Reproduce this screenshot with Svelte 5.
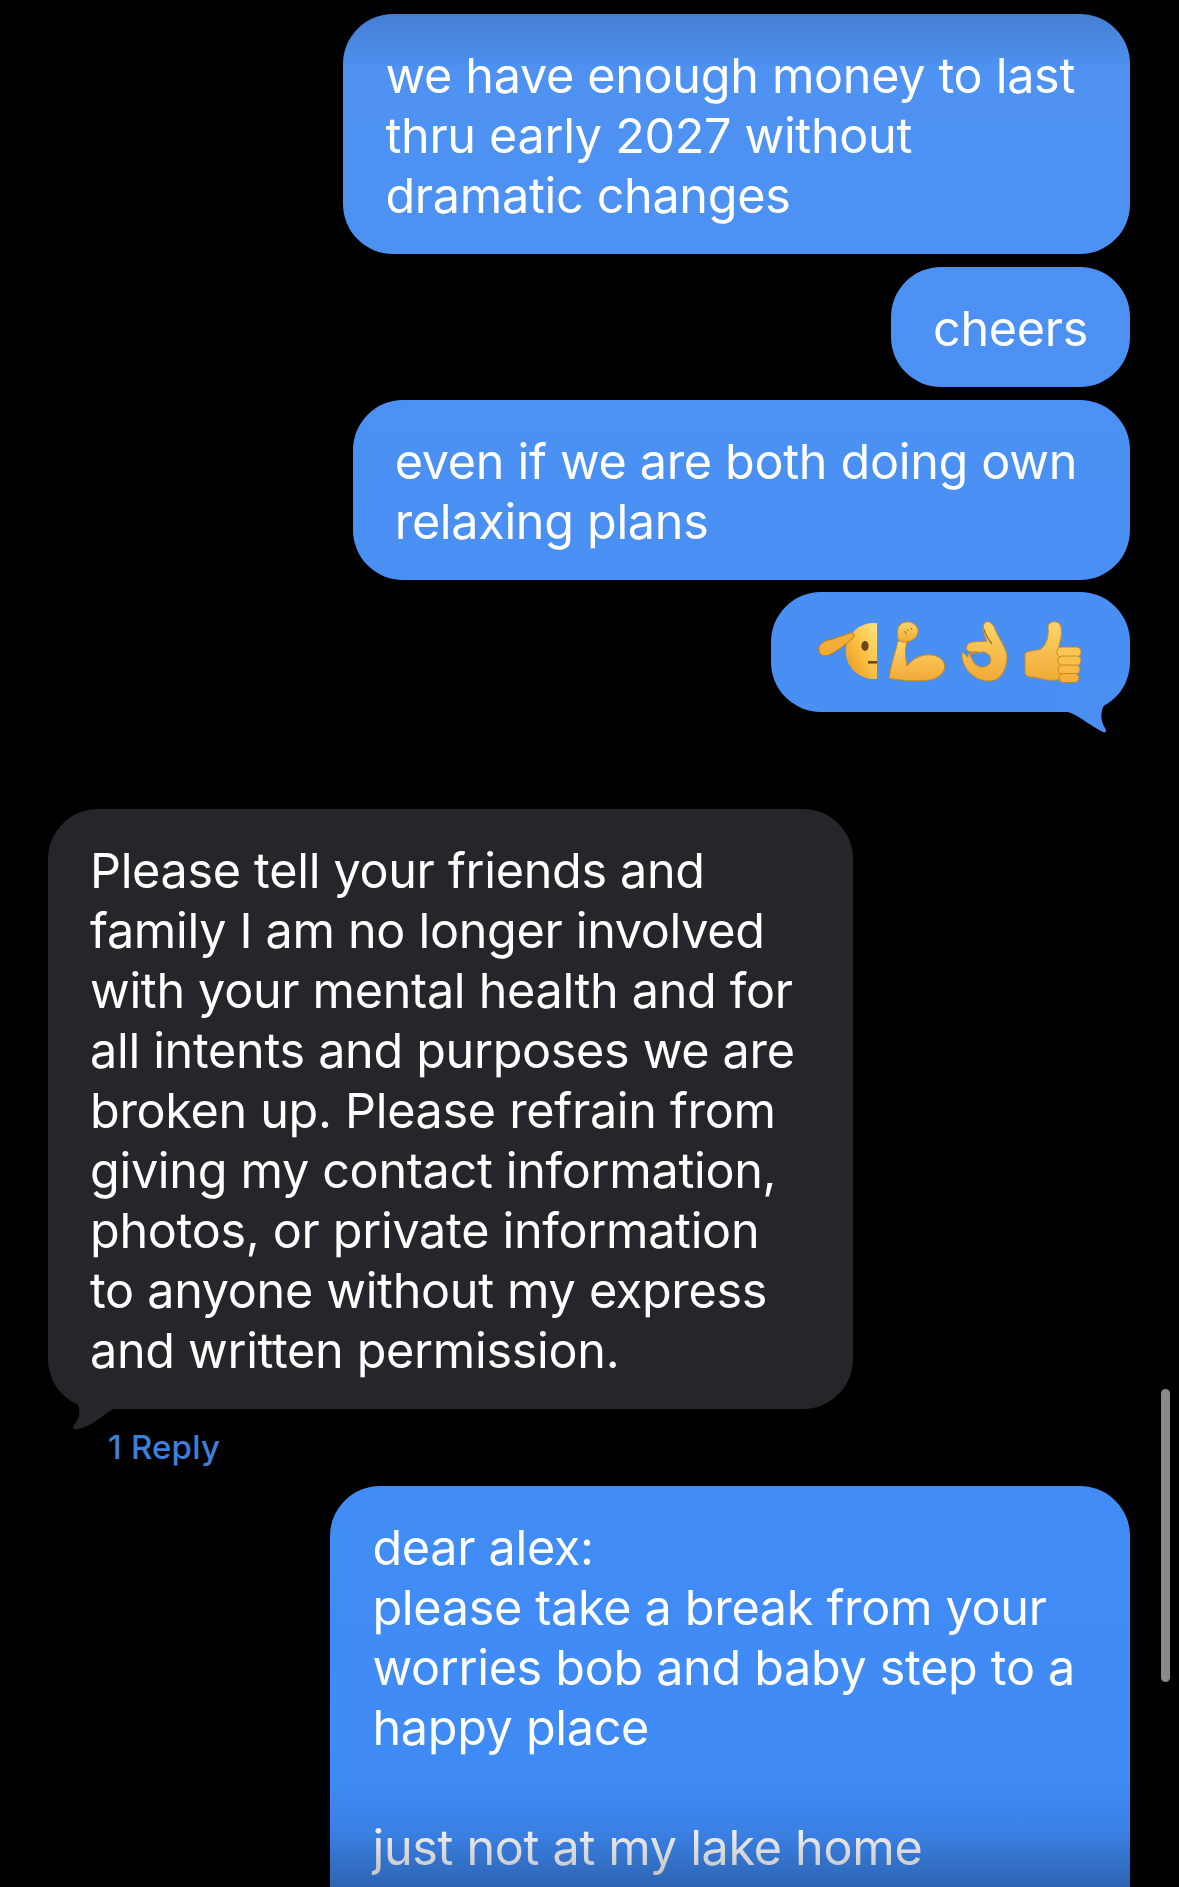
<script>
  // messages in the order they appear, newest last
  const topMessages = [
    { text: "we have enough money to last\nthru early 2027 without\ndramatic changes", wrapped: true },
    { text: "cheers", wrapped: false },
    { text: "even if we are both doing own\nrelaxing plans", wrapped: true, tight: true },
  ];

  const received =
    "Please tell your friends and\nfamily I am no longer involved\nwith your mental health and for\nall intents and purposes we are\nbroken up. Please refrain from\ngiving my contact information,\nphotos, or private information\nto anyone without my express\nand written permission.";

  const lastMessage =
    "dear alex:\nplease take a break from your\nworries bob and baby step to a\nhappy place\n\njust not at my lake home";
</script>

<div class="screen">
  <div class="chat">
    {#each topMessages as msg}
      <div class="bubble sent" class:wrapped={msg.wrapped} class:tight={msg.tight}>{msg.text}</div>
    {/each}

    <div class="bubble sent emoji-bubble">
      <svg class="emoji" viewBox="815 620 270 66" width="270" height="66">
        <defs>
          <linearGradient id="skin" x1="0" y1="0" x2="0" y2="1">
            <stop offset="0" stop-color="#fdd56a" />
            <stop offset="1" stop-color="#f0a936" />
          </linearGradient>
          <linearGradient id="face" x1="1" y1="0" x2="0" y2="1">
            <stop offset="0" stop-color="#ffe680" />
            <stop offset="0.55" stop-color="#f9bb3e" />
            <stop offset="1" stop-color="#e8901e" />
          </linearGradient>
        </defs>

        <!-- half a saluting face -->
        <path d="M878 624.2A28 28 0 1 0 878 679.8Z" fill="url(#face)" />
        <ellipse cx="866" cy="647" rx="3.6" ry="5" fill="#6b4513" />
        <rect x="869" y="662" width="9" height="2.6" fill="#6b4513" />
        <path
          d="M820 652C818 645 826 641 834 640L851 634C856 633 856 638 853 640C846 646 838 652 832 655C826 658 821 657 820 652Z"
          fill="#f3ae38"
          stroke="#bf7c1e"
          stroke-width="1"
        />

        <!-- flexed biceps -->
        <path
          d="M899 642C896 655 892 665 890 679C900 682 925 683 935 680C945 676 948 668 944 662C938 654 920 652 908 667C906 658 906 650 908 642Z"
          fill="url(#skin)"
          stroke="#c98a26"
          stroke-width="1"
        />
        <path
          d="M899 640C897 632 899 624 907 623C913 622 920 627 919 633C918 640 910 644 903 643Z"
          fill="url(#skin)"
          stroke="#c98a26"
          stroke-width="1"
        />
        <path d="M908 630l2 2M912 629l1 2M906 632l1 3" stroke="#a8691a" stroke-width="1" fill="none" />

        <!-- ok hand -->
        <path
          fill-rule="evenodd"
          d="M963 654C962 668 975 683 992 682C1003 681 1008 668 1008 658C1008 650 1000 640 996 630C994 624 988 620 985 625C983 630 985 636 988 642C982 643 972 642 969 645C966 649 967 652 972 653L979 653C973 653 969 654 969 657C970 662 965 652 963 654ZM971 655C974 668 985 672 991 664C994 658 988 652 982 653C978 654 974 654 971 655Z"
          fill="url(#skin)"
          stroke="#c98a26"
          stroke-width="1"
        />
        <path d="M985 630C986 636 990 641 993 645" stroke="#a8691a" stroke-width="1.4" fill="none" />

        <!-- thumbs up -->
        <path
          d="M1026 654C1030 651 1038 652 1042 650C1048 645 1050 636 1049 628C1049 622 1060 620 1062 628C1064 636 1060 644 1060 648L1062 680C1050 684 1040 678 1032 678C1028 678 1026 676 1026 672Z"
          fill="url(#skin)"
          stroke="#c98a26"
          stroke-width="1"
        />
        <rect x="1058" y="648" width="24" height="10" rx="4.5" fill="#fbc652" stroke="#bf7c1e" stroke-width="0.8" />
        <rect x="1059" y="657" width="23" height="9.5" rx="4.5" fill="#f9c04a" stroke="#bf7c1e" stroke-width="0.8" />
        <rect x="1059" y="666" width="22" height="9" rx="4.5" fill="#f6b942" stroke="#bf7c1e" stroke-width="0.8" />
        <rect x="1060" y="674.5" width="20" height="9" rx="4.5" fill="#f3b23a" stroke="#bf7c1e" stroke-width="0.8" />
      </svg>
      <svg class="tail tail-right" viewBox="1060 684 70 50" width="70" height="50">
        <path d="M1060 684V712H1068C1080 716 1092 727 1103 732C1106 733 1107 731 1105 728C1100 720 1100 710 1106 702C1112 695 1118 690 1125 684Z" />
      </svg>
    </div>

    <div class="bubble incoming wrapped">
      {received}
      <svg class="tail tail-left" viewBox="48 1380 70 55" width="70" height="55">
        <path d="M54 1380C60 1390 72 1397 78 1405C81 1412 79 1420 73 1426C72 1429 75 1430 78 1429C90 1427 102 1416 113 1409L118 1380Z" />
      </svg>
    </div>
    <div class="reply-count">1 Reply</div>

    <div class="bubble sent wrapped last">{lastMessage}</div>
  </div>

  <div class="fade-top"></div>
  <div class="fade-bottom"></div>
  <div class="scrollbar"></div>
</div>

<style>
  :global(body) {
    background: #000;
  }
  .screen {
    position: relative;
    height: 1887px;
    overflow: hidden;
    background: #000;
    font-family: Inter, "Liberation Sans", sans-serif;
  }
  .chat {
    display: flex;
    flex-direction: column;
    gap: 13px;
    padding: 14px 49px 0 48px;
  }
  .bubble {
    position: relative;
    padding: 32px 42px 28px;
    border-radius: 50px;
    font-size: 48.5px;
    line-height: 60px;
    letter-spacing: -0.3px;
    color: #fff;
    white-space: pre-line;
    width: fit-content;
  }
  .wrapped {
    padding-right: 55px;
  }
  .tight {
    padding-right: 53px;
  }
  .last {
    /* runs on past the bottom of the screen */
    padding-bottom: 90px;
  }
  .sent {
    align-self: flex-end;
    background: linear-gradient(#4f92f2, #3e8af6) fixed;
  }
  .incoming {
    align-self: flex-start;
    margin-top: 83px;
    background: #26262a;
    padding-right: 58px;
  }
  .emoji-bubble {
    display: flex;
    align-items: center;
    margin-top: -1px;
    margin-bottom: 1px;
    padding: 27px 46px 27px 43px;
  }
  .emoji {
    display: block;
  }
  .tail {
    position: absolute;
    display: block;
  }
  .tail-right {
    right: 0;
    bottom: -22px;
    fill: #4b8ff3;
  }
  .tail-left {
    left: 0;
    bottom: -26px;
    fill: #26262a;
  }
  .reply-count {
    margin: 5px 0 6px 60px;
    font-size: 33px;
    font-weight: 500;
    line-height: 40px;
    letter-spacing: 0.2px;
    color: #3f7fdc;
  }
  .fade-top {
    position: absolute;
    left: 0;
    right: 0;
    top: 0;
    height: 70px;
    background: linear-gradient(rgba(0, 0, 0, 0.16), transparent);
  }
  .fade-bottom {
    position: absolute;
    left: 0;
    right: 0;
    bottom: 0;
    height: 110px;
    background: linear-gradient(transparent, rgba(0, 0, 0, 0.07) 50%, rgba(0, 0, 0, 0.28));
  }
  .scrollbar {
    position: absolute;
    top: 1389px;
    right: 9px;
    width: 9px;
    height: 293px;
    border-radius: 5px;
    background: #8a8a8a;
  }
</style>
